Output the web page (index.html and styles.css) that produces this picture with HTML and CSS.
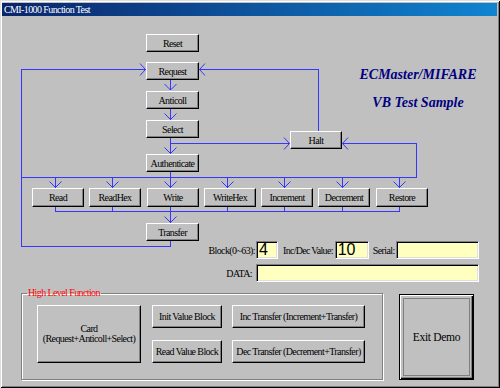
FILE: index.html
```html
<!DOCTYPE html>
<html lang="en">
<head>
    <meta charset="UTF-8">
    <meta name="viewport" content="width=device-width, initial-scale=1.0">
    <title>CMI-1000 Function Test</title>
    <link rel="stylesheet" href="styles.css">
</head>
<body>
    <div class="window">
        <div class="titlebar">CMI-1000 Function Test</div>

        <!-- flow chart of the low level calls -->
        <div class="flow">
            <svg class="wires" width="500" height="240" viewBox="0 16 500 240">
                <g fill="none" stroke="#3636ff" stroke-width="1" shape-rendering="crispEdges">
                    <path d="M21.5 246.5 V69.5 H145.5 M170.5 241 V246.5 H21.5
                             M199 69.5 H318.5 V131
                             M170.5 80 V90 M170.5 108 V120 M170.5 138 V154
                             M170.5 143.5 H290 M342 143.5 H416.5 V177.5
                             M170.5 172 V177.5 M21.5 177.5 H416.5
                             M55.5 177.5 V188 M112.5 177.5 V188 M170.5 177.5 V188 M227.5 177.5 V188
                             M284.5 177.5 V188 M342.5 177.5 V188 M399.5 177.5 V188
                             M55.5 207 V211.5 M112.5 207 V211.5 M227.5 207 V211.5 M284.5 207 V211.5
                             M342.5 207 V211.5 M399.5 207 V211.5 M55.5 211.5 H399.5
                             M170.5 207 V223"/>
                </g>
                <g fill="none" stroke="#3636ff" stroke-width="1">
                    <path d="M140 63.5 L145.5 69.5 L140 75.5"/>
                    <path d="M205 63.5 L199.5 69.5 L205 75.5"/>
                    <path d="M164.5 84 L170.5 90 L176.5 84"/>
                    <path d="M164.5 113.5 L170.5 119.5 L176.5 113.5"/>
                    <path d="M164.5 147.5 L170.5 153.5 L176.5 147.5"/>
                    <path d="M284 137.5 L289.5 143.5 L284 149.5"/>
                    <path d="M348 137.5 L342.5 143.5 L348 149.5"/>
                    <path d="M49.5 181.5 L55.5 187.5 L61.5 181.5"/>
                    <path d="M106.5 181.5 L112.5 187.5 L118.5 181.5"/>
                    <path d="M164.5 181.5 L170.5 187.5 L176.5 181.5"/>
                    <path d="M221.5 181.5 L227.5 187.5 L233.5 181.5"/>
                    <path d="M278.5 181.5 L284.5 187.5 L290.5 181.5"/>
                    <path d="M336.5 181.5 L342.5 187.5 L348.5 181.5"/>
                    <path d="M393.5 181.5 L399.5 187.5 L405.5 181.5"/>
                    <path d="M164.5 216.5 L170.5 222.5 L176.5 216.5"/>
                </g>
            </svg>

            <button class="btn node col n-reset">Reset</button>
            <button class="btn node col n-request">Request</button>
            <button class="btn node col n-anticoll">Anticoll</button>
            <button class="btn node col n-select">Select</button>
            <button class="btn node col n-auth">Authenticate</button>
            <button class="btn node n-halt">Halt</button>

            <button class="btn node op n-read">Read</button>
            <button class="btn node op n-readhex">ReadHex</button>
            <button class="btn node op n-write">Write</button>
            <button class="btn node op n-writehex">WriteHex</button>
            <button class="btn node op n-inc">Increment</button>
            <button class="btn node op n-dec">Decrement</button>
            <button class="btn node op n-restore">Restore</button>

            <button class="btn node col n-transfer">Transfer</button>

            <div class="brand">
                <div>ECMaster/MIFARE</div>
                <div>VB Test Sample</div>
            </div>
        </div>

        <div class="fields">
            <label class="lbl" for="block">Block(0~63):</label>
            <div class="inline">
                <input class="field f-block" id="block" type="text" value="4">
                <label class="lbl lbl-inc" for="incdec">Inc/Dec Value:</label>
                <input class="field f-inc" id="incdec" type="text" value="10">
                <label class="lbl lbl-serial" for="serial">Serial:</label>
                <input class="field f-serial" id="serial" type="text">
            </div>
            <label class="lbl lbl-data" for="data">DATA:</label>
            <input class="field f-data" id="data" type="text">
        </div>

        <div class="lower">
            <fieldset class="group">
                <legend>High Level Function</legend>
                <div class="hl-grid">
                    <button class="btn card">Card<br>(Request+Anticoll+Select)</button>
                    <button class="btn">Init Value Block</button>
                    <button class="btn">Inc Transfer (Increment+Transfer)</button>
                    <button class="btn">Read Value Block</button>
                    <button class="btn">Dec Transfer (Decrement+Transfer)</button>
                </div>
            </fieldset>
            <button class="btn exit">Exit Demo</button>
        </div>
    </div>
</body>
</html>
```

FILE: styles.css
```css
body {
    margin: 0;
    background-color: #c0c0c0;
    font-family: "Liberation Serif", serif;
    color: #000;
}

.window {
    width: 500px;
    height: 388px;
    box-sizing: border-box;
    background-color: #c0c0c0;
    box-shadow: inset 1px 1px #dfdfdf, inset -1px -1px #000, inset 2px 2px #fff, inset -2px -2px #808080;
    overflow: hidden;
}

.titlebar {
    margin: 3px 3px 0 2px;
    height: 13px;
    padding-left: 2px;
    background: linear-gradient(to right, #0a246a, #1084d0);
    color: white;
    font-size: 10px;
    line-height: 13px;
    letter-spacing: -0.6px;
}

/* buttons */
.btn {
    box-sizing: border-box;
    padding: 0;
    font: 10px "Liberation Serif", serif;
    letter-spacing: -0.6px;
    color: #000;
    background-color: #c0c0c0;
    border: 1px solid;
    border-color: #fff #000 #000 #fff;
    box-shadow: inset -1px -1px #808080;
}

/* flow chart */
.flow {
    position: relative;
    height: 225px;
}

.wires {
    position: absolute;
    left: 0;
    top: 0;
}

.node {
    position: absolute;
    height: 18px;
}

.col {
    left: 146px;
    width: 53px;
}

.n-reset { top: 18px; }
.n-request { top: 46px; }
.n-anticoll { top: 75px; }
.n-select { top: 104px; }
.n-auth { top: 138px; }
.n-transfer { top: 207px; }

.n-halt {
    left: 290px;
    top: 115px;
    width: 52px;
}

.op {
    top: 172px;
    width: 52px;
    height: 19px;
}

.n-read { left: 32px; }
.n-readhex { left: 89px; }
.n-write { left: 147px; }
.n-writehex { left: 204px; }
.n-inc { left: 261px; }
.n-dec { left: 318px; }
.n-restore { left: 376px; }

.brand {
    position: absolute;
    left: 340px;
    top: 45px;
    width: 156px;
    text-align: center;
    color: #000080;
    font-size: 14px;
    font-style: italic;
    font-weight: bold;
    line-height: 28px;
}

/* text fields */
.fields {
    margin-left: 200px;
    display: grid;
    grid-template-columns: 56px 223px;
    row-gap: 5px;
    align-items: center;
}

.lbl {
    font-size: 10px;
    letter-spacing: -0.6px;
    white-space: nowrap;
}

.fields > .lbl {
    text-align: right;
    padding-right: 1px;
}

.fields > .lbl-data {
    padding-right: 4px;
}

.inline {
    display: flex;
    align-items: center;
}

.lbl-inc { margin-left: 5px; letter-spacing: -0.7px; }
.lbl-serial { margin-left: 4px; }

.field {
    box-sizing: border-box;
    height: 18px;
    padding: 0 2px;
    border: 1px solid;
    border-color: #808080 #fff #fff #808080;
    box-shadow: inset 1px 1px #000, inset -1px -1px #dfdfdf;
    background-color: #ffffc0;
    font: 16px "Liberation Sans", sans-serif;
    line-height: 16px;
    outline: none;
}

.f-block { width: 22px; }
.f-inc { width: 34px; margin-left: 2px; }
.f-serial { flex: 1; min-width: 0; margin-left: 1px; }
.f-data { width: 223px; }

/* high level section */
.lower {
    display: flex;
    align-items: flex-start;
    margin-top: 5px;
    padding-left: 21px;
}

.group {
    margin: 0;
    padding: 6px 16px 16px 5px;
    width: 362px;
    box-sizing: border-box;
    border: 1px solid #808080;
    box-shadow: 1px 1px #fff, inset 1px 1px #fff;
}

.group legend {
    padding: 0 1px;
    color: #ff0000;
    font-size: 10px;
    line-height: 12px;
    letter-spacing: -0.6px;
}

.hl-grid {
    margin-left: 10px;
    display: grid;
    grid-template-columns: 105px 70px 133px;
    grid-template-rows: 23px 23px;
    column-gap: 10px;
    row-gap: 12px;
}

.card {
    grid-row: 1 / 3;
    width: 104px;
    line-height: 10px;
}

.exit {
    margin-left: 16px;
    margin-top: 7px;
    width: 75px;
    height: 86px;
    font-size: 11.5px;
    letter-spacing: -0.3px;
    border-color: #000;
    box-shadow: inset 1px 1px #fff, inset -1px -1px #000, inset -2px -2px #808080;
    outline: 1px solid #808080;
    outline-offset: -5px;
}
```
